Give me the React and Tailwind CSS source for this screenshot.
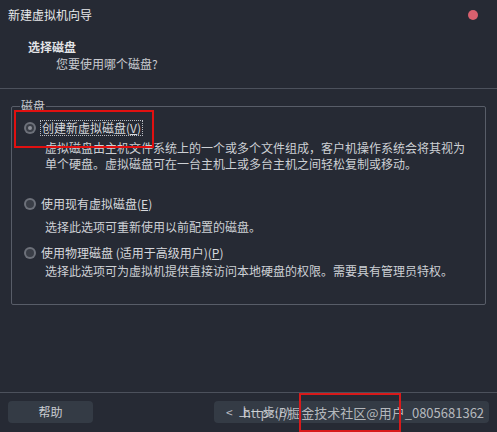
import React from 'react';

const Radio = ({ checked }) => (
  <span className="w-[12px] h-[12px] rounded-full bg-[#6d717a] flex items-center justify-center shrink-0">
    <span className="w-[8px] h-[8px] rounded-full bg-[#3a3e47] flex items-center justify-center">
      {checked && <span className="w-[4px] h-[4px] rounded-full bg-[#8d9098]" />}
    </span>
  </span>
);

const App = () => {
  return (
    <div className="relative w-[497px] h-[432px] overflow-hidden bg-[#262a34] text-[12px] leading-[16px] text-[#d6d8dc] font-['Noto_Sans_CJK_SC','Noto_Sans',sans-serif]">
      {/* title bar */}
      <div className="h-[30px] px-2 flex items-center justify-between">
        <span className="text-[#e8e9eb]">新建虚拟机向导</span>
        <span className="w-[10px] h-[10px] rounded-full bg-[#d8606e] mr-[11px]" />
      </div>

      {/* header */}
      <div className="pl-[28px] pt-[9px] font-bold text-[#e2e3e6]">选择磁盘</div>
      <div className="pl-[56px] mt-[1px] text-[#c9cbd0]">您要使用哪个磁盘?</div>
      <div className="mt-[16px] h-px bg-[#4c515c]" />

      {/* group */}
      <div className="relative mx-[11px] mt-[17px] border border-[#585d68] rounded-[2px] pl-[12px] pr-2 pt-[13px] pb-[25px]">
        <span className="absolute left-[8px] -top-[9px] px-[1px] bg-[#262a34] text-[#c9cbd0]">磁盘</span>

        <div className="flex items-center gap-[4px] h-[16px]">
          <Radio checked />
          <span className="border border-dotted border-[#b8bbc2] px-[1px] leading-[14px]">创建新虚拟磁盘(<span className="underline">V</span>)</span>
        </div>
        <div className="pl-[21px] mt-[4px] text-[#cdd0d4]">
          虚拟磁盘由主机文件系统上的一个或多个文件组成，客户机操作系统会将其视为
          <br />
          单个硬盘。虚拟磁盘可在一台主机上或多台主机之间轻松复制或移动。
        </div>

        <div className="flex items-center gap-[5px] h-[16px] mt-[24px]">
          <Radio />
          <span>使用现有虚拟磁盘(<span className="underline">E</span>)</span>
        </div>
        <div className="pl-[21px] mt-[7px] text-[#cdd0d4]">选择此选项可重新使用以前配置的磁盘。</div>

        <div className="flex items-center gap-[5px] h-[16px] mt-[10px]">
          <Radio />
          <span>使用物理磁盘 (适用于高级用户)(<span className="underline">P</span>)</span>
        </div>
        <div className="pl-[21px] mt-[2px] text-[#cdd0d4]">选择此选项可为虚拟机提供直接访问本地硬盘的权限。需要具有管理员特权。</div>
      </div>

      <div className="mt-[87px] h-px bg-[#4c515c]" />

      {/* footer buttons */}
      <div className="flex items-center justify-between px-2 mt-[8px]">
        <button className="w-[85px] h-[22px] rounded-[4px] bg-[#343b45] text-[#c9ccd1]">帮助</button>
        <div className="w-[275px] h-[22px] rounded-[4px] bg-[#343b45] flex items-center pl-[12px] text-[#b9bcc2]">
          <span className="mr-[6px]">&lt;</span>
          <span>上一步(B)</span>
        </div>
      </div>

      {/* watermark */}
      <span className="absolute left-[243px] top-[405px] text-[13px] leading-[16px] text-[#d8dadd]/80 whitespace-nowrap">
        https://掘金技术社区@用户_0805681362
      </span>

      {/* red annotations */}
      <div className="absolute left-[14px] top-[110px] w-[140px] h-[38px] border-2 border-[#e01010]" />
      <div className="absolute left-[299px] top-[393px] w-[102px] h-[39px] border-2 border-[#d81a1a]" />
    </div>
  );
};

export default App;
